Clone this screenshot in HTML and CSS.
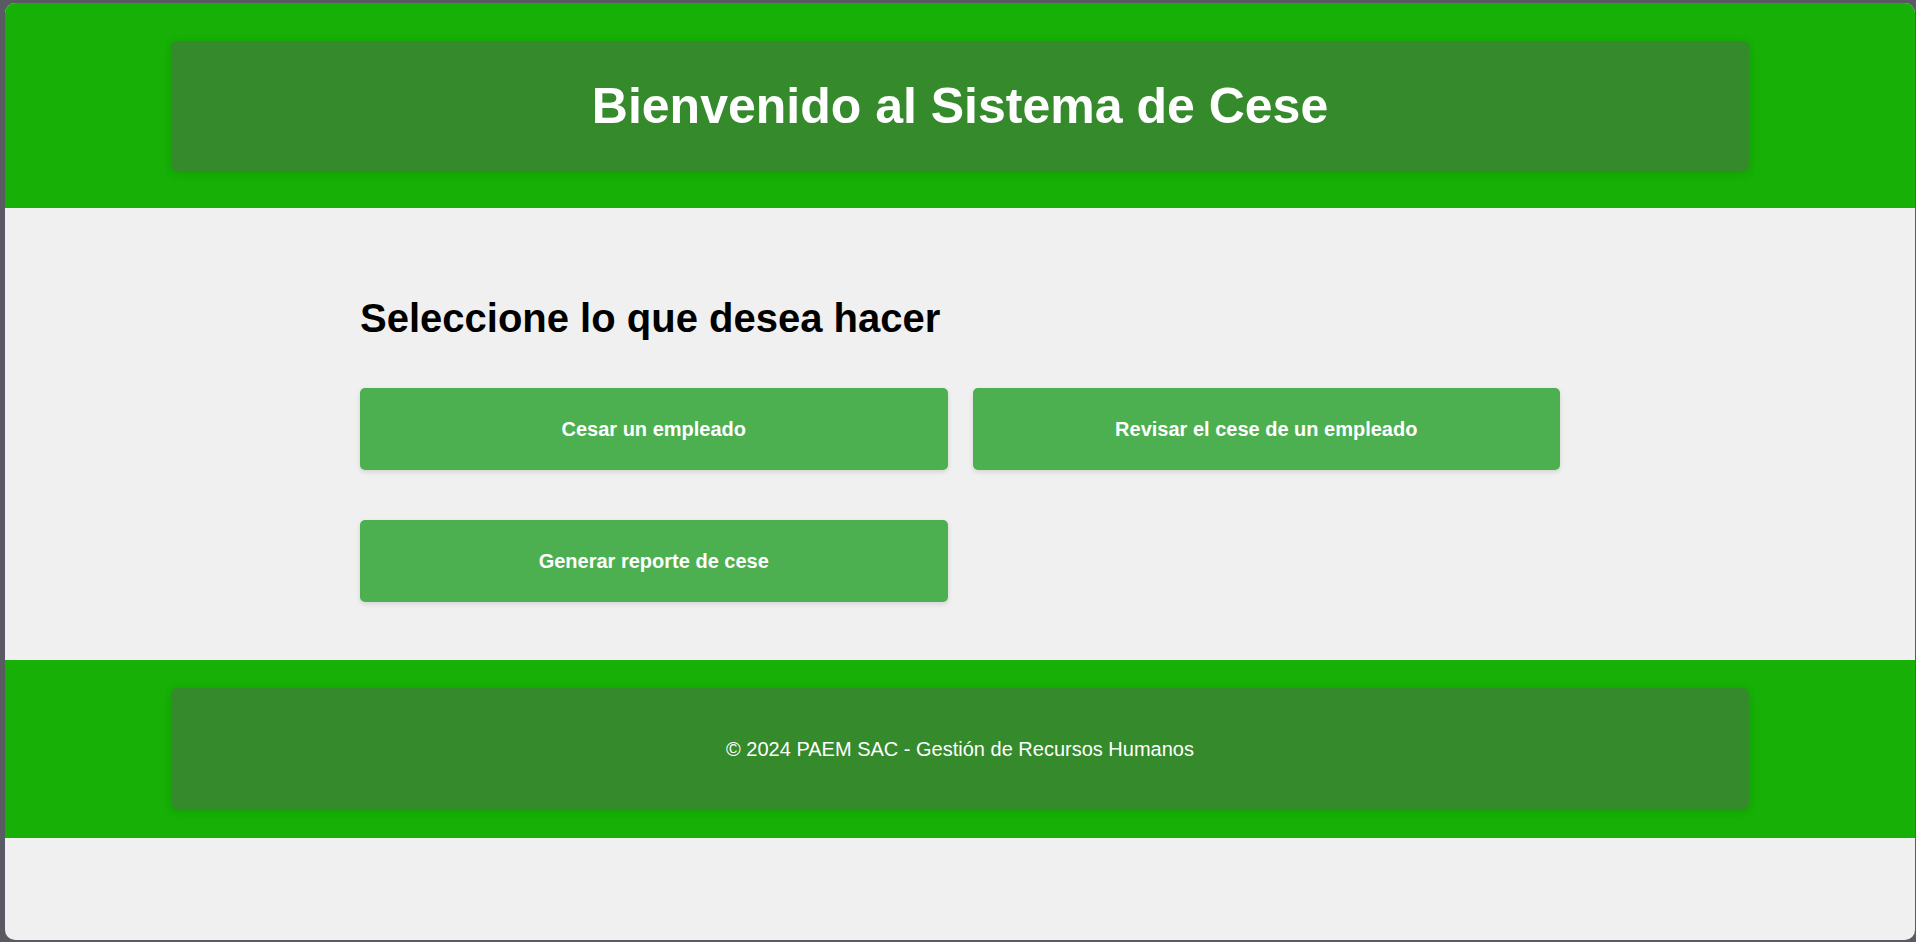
FILE: index.html
```html
<!DOCTYPE html>
<html lang="es">
<head>
<meta charset="utf-8">
<title>Sistema de Cese</title>
<link rel="stylesheet" href="styles.css">
</head>
<body>
<div class="window">
  <header class="site-header">
    <div class="header-box">
      <h1 class="title">Bienvenido al Sistema de Cese</h1>
    </div>
  </header>
  <main class="main">
    <div class="container">
      <h2 class="section-title">Seleccione lo que desea hacer</h2>
      <div class="actions">
        <button class="action-btn">Cesar un empleado</button>
        <button class="action-btn">Revisar el cese de un empleado</button>
        <button class="action-btn">Generar reporte de cese</button>
      </div>
    </div>
  </main>
  <footer class="site-footer">
    <div class="footer-box">
      <p class="footer-text">© 2024 PAEM SAC - Gestión de Recursos Humanos</p>
    </div>
  </footer>
</div>
</body>
</html>
```

FILE: styles.css
```css
* { box-sizing: border-box; }

html, body {
  margin: 0;
  padding: 0;
  height: 100%;
}

body {
  background: #595a62;
  font-family: "Liberation Sans", Arial, sans-serif;
  padding: 3px 1px 2px 5px;
}

.window {
  height: 937px;
  background: #f0f0f0;
  border-radius: 10px;
  overflow: hidden;
  display: flex;
  flex-direction: column;
}

.site-header {
  background: #16b006;
  padding: 38px 166px 37px;
}

.header-box {
  height: 130px;
  background: #358a2c;
  border-radius: 6px;
  box-shadow: 0 2px 8px rgba(0, 0, 0, 0.12);
  display: flex;
  align-items: center;
  justify-content: center;
  padding-top: 2px;
}

.title {
  margin: 0;
  color: #ffffff;
  font-size: 50px;
  font-weight: bold;
  line-height: 1.15;
}

.main {
  padding: 87px 0 58px;
}

.container {
  width: 1200px;
  margin: 0 auto;
}

.section-title {
  margin: 0 0 47px;
  font-size: 40px;
  font-weight: bold;
  line-height: 46px;
  color: #000;
}

.actions {
  display: grid;
  grid-template-columns: 1fr 1fr;
  column-gap: 25px;
  row-gap: 50px;
}

.action-btn {
  height: 82px;
  border: none;
  border-radius: 5px;
  background: #4caf50;
  color: #ffffff;
  font-family: "Liberation Sans", Arial, sans-serif;
  font-size: 20px;
  font-weight: bold;
  box-shadow: 0 2px 5px rgba(0, 0, 0, 0.12);
  cursor: pointer;
}

.site-footer {
  background: #16b006;
  padding: 28px 166px 29px;
}

.footer-box {
  height: 121px;
  background: #358a2c;
  border-radius: 6px;
  box-shadow: 0 2px 8px rgba(0, 0, 0, 0.12);
  display: flex;
  align-items: center;
  justify-content: center;
  padding-top: 2px;
}

.footer-text {
  margin: 0;
  color: #ffffff;
  font-size: 20px;
}
```
